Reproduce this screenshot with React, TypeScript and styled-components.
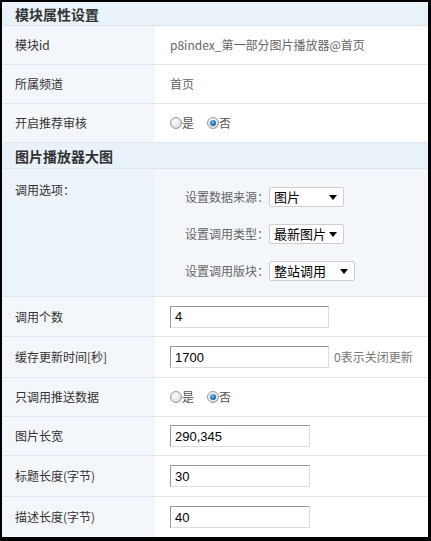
import React from "react";
import styled, { createGlobalStyle, css } from "styled-components";

const GlobalStyle = createGlobalStyle`
  html, body {
    margin: 0;
    padding: 0;
    background: #000;
  }
  body {
    font-family: "Noto Sans CJK SC", "Noto Sans", sans-serif;
    -webkit-font-smoothing: antialiased;
  }
`;

const Frame = styled.div`
  width: 431px;
  height: 541px;
  box-sizing: border-box;
  padding: 2px 3px 4px 2px;
  background: #000;
`;

const Panel = styled.div`
  width: 426px;
  height: 535px;
  overflow: hidden;
  background: #fff;
  display: flex;
  flex-direction: column;
`;

const SectionHead = styled.div<{ $h: number }>`
  height: ${(p) => p.$h}px;
  flex: none;
  box-sizing: border-box;
  background: #e9f1f9;
  border-bottom: 1px solid #d9e5f1;
  padding-left: 13px;
  display: flex;
  align-items: center;
  font-size: 14px;
  font-weight: bold;
  color: #333;
  line-height: 16px;
`;

const Row = styled.div<{ $h: number }>`
  height: ${(p) => p.$h}px;
  flex: none;
  box-sizing: border-box;
  display: grid;
  grid-template-columns: 153px 1fr;
  border-bottom: 1px solid #dde8f3;
`;

const LabelCell = styled.div<{ $top?: boolean; $tint?: boolean }>`
  background: ${(p) => (p.$tint ? "#ecf3fa" : "#f3f7fc")};
  padding-left: 13px;
  font-size: 12px;
  color: #333;
  line-height: 14px;
  display: flex;
  ${(p) =>
    p.$top
      ? css`
          align-items: flex-start;
          padding-top: 14px;
        `
      : css`
          align-items: center;
        `}
`;

const ValueCell = styled.div<{ $tint?: boolean }>`
  background: ${(p) => (p.$tint ? "#f3f7fc" : "#fff")};
  padding-left: 15px;
  display: flex;
  align-items: center;
  font-size: 12px;
  color: #666;
  line-height: 14px;
`;

const RadioGroup = styled.div`
  display: flex;
  align-items: center;
  gap: 13px;
`;

const RadioLabel = styled.label`
  display: flex;
  align-items: center;
  font-size: 12px;
  color: #555;
  cursor: pointer;
`;

const RadioDot = styled.span<{ $on?: boolean }>`
  width: 12px;
  height: 12px;
  border-radius: 50%;
  box-sizing: border-box;
  border: 1px solid #9a9a9a;
  background: radial-gradient(circle at 40% 35%, #fff 0%, #e6e6e6 55%, #c4c4c4 100%);
  position: relative;
  ${(p) =>
    p.$on &&
    css`
      &::after {
        content: "";
        position: absolute;
        left: 2px;
        top: 2px;
        width: 6px;
        height: 6px;
        border-radius: 50%;
        background: radial-gradient(circle at 40% 35%, #6cc0f5 0%, #1a6cc0 60%, #0c3f7a 100%);
      }
    `}
`;

const OptionList = styled.div`
  padding-left: 15px;
  display: flex;
  flex-direction: column;
  gap: 17px;
  padding-top: 2px;
`;

const OptionLine = styled.div`
  display: flex;
  align-items: center;
  font-size: 12px;
  color: #666;
`;

const SelectWrap = styled.span<{ $w: number }>`
  position: relative;
  display: inline-block;
  width: ${(p) => p.$w}px;
  height: 20px;

  &::after {
    content: "";
    position: absolute;
    right: 7px;
    top: 8px;
    border-left: 4px solid transparent;
    border-right: 4px solid transparent;
    border-top: 5px solid #000;
    pointer-events: none;
  }
`;

const Select = styled.select`
  appearance: none;
  -webkit-appearance: none;
  width: 100%;
  height: 100%;
  box-sizing: border-box;
  border: 1px solid #cfcfcf;
  border-radius: 2px;
  background: #fff;
  font-family: "Noto Sans CJK SC", sans-serif;
  font-size: 13px;
  color: #000;
  padding: 0 0 0 4px;
  line-height: 18px;
  outline: none;
`;

const TextInput = styled.input<{ $w: number }>`
  width: ${(p) => p.$w}px;
  height: 22px;
  box-sizing: border-box;
  border: 1px solid #dcdcdc;
  border-top-color: #9a9a9a;
  border-left-color: #9a9a9a;
  padding: 0 4px;
  font-family: "Liberation Sans", Arial, sans-serif;
  font-size: 13px;
  color: #000;
  background: #fff;
  outline: none;
`;

const Hint = styled.span`
  margin-left: 5px;
  font-size: 12px;
  color: #777;
`;

type RadioProps = { value: "yes" | "no" };

const YesNo: React.FC<RadioProps> = ({ value }) => (
  <RadioGroup>
    <RadioLabel>
      <RadioDot $on={value === "yes"} />是
    </RadioLabel>
    <RadioLabel>
      <RadioDot $on={value === "no"} />否
    </RadioLabel>
  </RadioGroup>
);

const options = [
  { label: "设置数据来源：", value: "图片", width: 75 },
  { label: "设置调用类型：", value: "最新图片", width: 75 },
  { label: "设置调用版块：", value: "整站调用", width: 86 },
];

export default function App() {
  return (
    <>
      <GlobalStyle />
      <Frame>
        <Panel>
          <SectionHead $h={24}>模块属性设置</SectionHead>
          <Row $h={39}>
            <LabelCell>模块id</LabelCell>
            <ValueCell>p8index_第一部分图片播放器@首页</ValueCell>
          </Row>
          <Row $h={39}>
            <LabelCell>所属频道</LabelCell>
            <ValueCell>首页</ValueCell>
          </Row>
          <Row $h={39}>
            <LabelCell>开启推荐审核</LabelCell>
            <ValueCell>
              <YesNo value="no" />
            </ValueCell>
          </Row>

          <SectionHead $h={26}>图片播放器大图</SectionHead>
          <Row $h={128}>
            <LabelCell $top $tint>
              调用选项：
            </LabelCell>
            <ValueCell $tint>
              <OptionList>
                {options.map((o) => (
                  <OptionLine key={o.label}>
                    {o.label}
                    <SelectWrap $w={o.width}>
                      <Select defaultValue={o.value}>
                        <option>{o.value}</option>
                      </Select>
                    </SelectWrap>
                  </OptionLine>
                ))}
              </OptionList>
            </ValueCell>
          </Row>
          <Row $h={40}>
            <LabelCell>调用个数</LabelCell>
            <ValueCell>
              <TextInput $w={159} defaultValue="4" />
            </ValueCell>
          </Row>
          <Row $h={41}>
            <LabelCell>缓存更新时间[秒]</LabelCell>
            <ValueCell>
              <TextInput $w={159} defaultValue="1700" />
              <Hint>0表示关闭更新</Hint>
            </ValueCell>
          </Row>
          <Row $h={39}>
            <LabelCell>只调用推送数据</LabelCell>
            <ValueCell>
              <YesNo value="no" />
            </ValueCell>
          </Row>
          <Row $h={39}>
            <LabelCell>图片长宽</LabelCell>
            <ValueCell>
              <TextInput $w={140} defaultValue="290,345" />
            </ValueCell>
          </Row>
          <Row $h={41}>
            <LabelCell>标题长度(字节)</LabelCell>
            <ValueCell>
              <TextInput $w={140} defaultValue="30" />
            </ValueCell>
          </Row>
          <Row $h={41}>
            <LabelCell>描述长度(字节)</LabelCell>
            <ValueCell>
              <TextInput $w={140} defaultValue="40" />
            </ValueCell>
          </Row>
        </Panel>
      </Frame>
    </>
  );
}
